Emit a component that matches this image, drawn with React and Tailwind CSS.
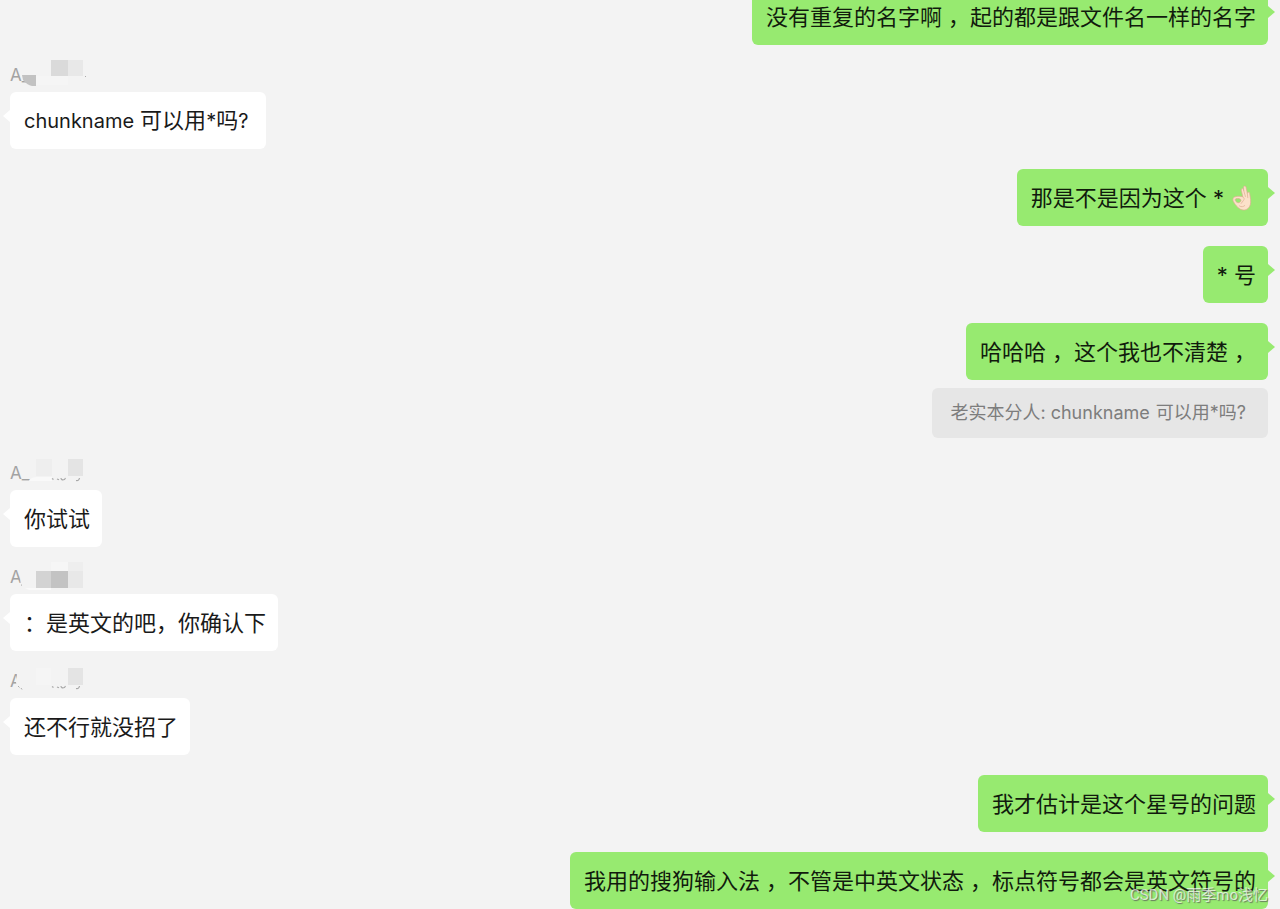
const TEXT_FONT = "font-['Inter','Noto_Sans_CJK_SC',sans-serif]";

// Full-width comma with some air before it
function Comma() {
  return <span className="pl-1.5">，</span>;
}

function OkHand() {
  return (
    <svg role="img" aria-label="OK" viewBox="0 0 20 26" className="mr-1 ml-2 h-[26px] w-5 shrink-0">
      <path
        fillRule="evenodd"
        d="M10.800 11.800L9.300 5.200C9 3.500 10.800 3 11.400 4.500L11.700 5.500 11.600 2.200C11.600.6 13.700.5 14 2.100L15.300 8.200 15.800 7.600C16.500 6.800 17.800 7.300 17.700 8.500L18.600 14.500C19 18.500 18.300 21.500 16 23.500 13.500 25.600 9.500 25.500 7 23.300 5.200 21.700 3.500 20.300 1.800 17.200.3 14.800.6 12.500 3.200 11.800 5.800 11 8.500 11.200 10.800 11.800zM4 13.700C2.900 14.100 3 15.300 3.900 16.400 4.900 17.600 6.100 18 7.300 17.500 8.500 17 9.100 16 9 15 8.700 13.600 5.800 13.100 4 13.700z"
        fill="#fbe1c9"
        stroke="#dcae90"
        strokeWidth=".7"
        strokeLinejoin="round"
      />
      <path d="M10.800 11.800c1.600.8 1.700 2.300.7 3.600l-2.300 3M11.700 5.500l1.700 6M15.300 8.200l.5 4.500M7.500 21c2 1.200 3.700.9 5.200-.4" fill="none" stroke="#dcae90" strokeWidth=".7" strokeLinecap="round" />
    </svg>
  );
}

function Sent({ children }) {
  return (
    <div className="relative flex h-[57px] max-w-full items-center rounded-[6px] bg-[#97ea70] pr-3 pl-[14px] text-[22px] leading-8 whitespace-nowrap text-[#111b0d]">
      <p className="whitespace-pre">{children}</p>
      <svg viewBox="0 0 7 12" className="absolute top-[18px] left-full h-3 w-[7px]" aria-hidden="true">
        <path d="M0 0l7 6-7 6z" fill="#97ea70" />
      </svg>
    </div>
  );
}

function Received({ name, mosaic, children }) {
  return (
    <article className="flex flex-col items-start">
      <div className="relative h-[27px] text-[17px] leading-5 text-[#a3a3a3]">
        <span>{name}</span>
        <svg viewBox="0 0 80 32" className="absolute bottom-0 left-0 h-8 w-20 max-w-none" aria-hidden="true">
          {mosaic}
        </svg>
      </div>
      <div className="relative flex h-[57px] items-center rounded-[6px] bg-white pr-3 pl-[14px] text-[22px] leading-8 whitespace-nowrap text-[#1a1a1a]">
        <p>{children}</p>
        <svg viewBox="0 0 7 12" className="absolute top-[18px] right-full h-3 w-[7px]" aria-hidden="true">
          <path d="M7 0L0 6l7 6z" fill="#fff" />
        </svg>
      </div>
    </article>
  );
}

const fragments = (
  <path d="M42 20.500l1.500 1M47 21l2 .8M51 20q0 2.500 3.500 1.500l1-1.500M66 22.500q3 .5 3.500-2.500" fill="none" stroke="#a8a8a8" strokeWidth="1.200" />
);

const mosaicOne = (
  <>
    <path d="M41 0h17v16H41z" fill="#dadada" />
    <path d="M58 0h15v16H58z" fill="#e8e8e8" />
    <path d="M26 16h32v9H26z" fill="#f5f5f5" />
    <path d="M12 15h14v11h-4q-5-1-9-6z" fill="#c2c2c2" />
    <path d="M75 16h1v1h-1z" fill="#aaa" />
  </>
);

const mosaicTwo = (
  <>
    <path d="M26 1h16v17H26z" fill="#eeeeee" />
    <path d="M58 1h15v17H58z" fill="#e4e4e4" />
    <path d="M19 23q2-4 8-4h15v4z" fill="#f9f9f9" />
    {fragments}
  </>
);

const mosaicThree = (
  <>
    <path d="M10.500 6h3v18h-3z" fill="#f3f3f3" />
    <path d="M11.500 22.500v1.200" stroke="#b5b5b5" fill="none" />
    <path d="M41 0h17v9H41z" fill="#f6f6f6" />
    <path d="M58 0h15v9H58z" fill="#eeeeee" />
    <path d="M26 9h15v17H26z" fill="#d3d3d3" />
    <path d="M41 9h17v17H41z" fill="#c3c3c3" />
    <path d="M58 9h15v17H58z" fill="#e8e8e8" />
    <path d="M15 26h26v2H19z" fill="#fafafa" />
  </>
);

const mosaicFour = (
  <>
    <path d="M7 8l5-1v16l-3 1-3-7z" fill="#f3f3f3" />
    <path d="M8 20l1.500 1.500M11 22l1 1.500" stroke="#adadad" fill="none" />
    <path d="M26 2h15v17H26z" fill="#f5f5f5" />
    <path d="M58 2h15v17H58z" fill="#e4e4e4" />
    {fragments}
  </>
);

export default function App() {
  return (
    <main className={`relative overflow-hidden bg-[#f3f3f3] ${TEXT_FONT}`} lang="zh-CN">
      <section className="-mt-3 flex flex-col gap-5 pr-3 pl-[10px]" aria-label="聊天记录">
        <article className="flex flex-col items-end">
          <Sent>没有重复的名字啊<Comma />起的都是跟文件名一样的名字</Sent>
        </article>

        <Received name="A_" mosaic={mosaicOne}>
          <span className="mr-1.5 text-[20px]">chunkname</span>可以用<span className="text-[20px]">*</span>吗<span className="mr-1.5 text-[20px]">?</span>
        </Received>

        <article className="flex flex-col items-end">
          <Sent>
            <span className="flex items-center whitespace-pre">那是不是因为这个 *<OkHand /></span>
          </Sent>
        </article>

        <article className="flex flex-col items-end">
          <Sent>* 号</Sent>
        </article>

        <article className="mb-[5px] flex flex-col items-end gap-2">
          <Sent>哈哈哈<Comma />这个我也不清楚<Comma /></Sent>
          <blockquote className="flex h-[50px] items-center rounded-[6px] bg-[#e6e6e6] pr-[22px] pl-[18px] text-[18px] leading-6 whitespace-nowrap text-[#7d7d7d]">
            <p>老实本分人: <span className="mr-1.5">chunkname</span>可以用*吗?</p>
          </blockquote>
        </article>

        <Received name="A_" mosaic={mosaicTwo}>你试试</Received>
        <Received name="A" mosaic={mosaicThree}>：是英文的吧，你确认下</Received>
        <Received name="A" mosaic={mosaicFour}>还不行就没招了</Received>

        <article className="flex flex-col items-end">
          <Sent>我才估计是这个星号的问题</Sent>
        </article>

        <article className="flex flex-col items-end">
          <Sent>我用的搜狗输入法<Comma />不管是中英文状态<Comma />标点符号都会是英文符号的</Sent>
        </article>
      </section>

      <p className="absolute right-3 bottom-1 font-['Roboto','Noto_Sans_CJK_SC',sans-serif] text-[15px] leading-5 text-white/70 [text-shadow:1px_1px_1px_rgba(90,90,90,0.8)]">
        CSDN @雨季mo浅忆
      </p>
    </main>
  );
}
